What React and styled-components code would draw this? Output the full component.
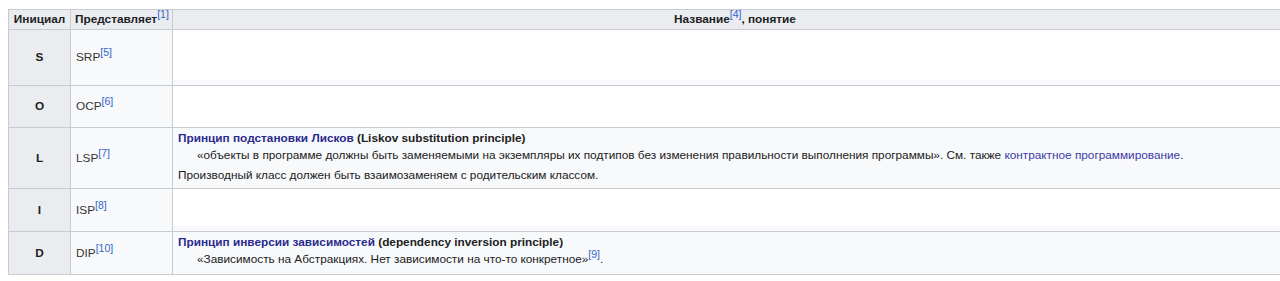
import React from "react";
import styled, { createGlobalStyle } from "styled-components";

const GlobalStyle = createGlobalStyle`
  body {
    margin: 9px 0 0 8px;
    background: #ffffff;
    font-family: "Liberation Sans", Arial, sans-serif;
    color: #202122;
    overflow: hidden;
  }
`;

const Table = styled.table`
  width: 1290px;
  border-collapse: collapse;
  background: #f8f9fa;
  font-size: 11.8px;
  line-height: 17px;
  table-layout: fixed;
`;

const HeadCell = styled.th`
  background: #eaecf0;
  border: 1px solid #c8ccd1;
  font-weight: bold;
  text-align: center;
  padding: 0 4px;
  height: 20px;
  white-space: nowrap;
  width: ${(p) => p.$w || "auto"};
  box-sizing: border-box;
`;

const Initial = styled.th`
  background: #eaecf0;
  border: 1px solid #c8ccd1;
  font-weight: bold;
  text-align: center;
  padding: 0 4px;
  height: ${(p) => p.$h}px;
  box-sizing: border-box;
`;

const Abbr = styled.td`
  border: 1px solid #c8ccd1;
  padding: 0 5px;
  color: #333;
  vertical-align: middle;
`;

const Body = styled.td`
  border: 1px solid #c8ccd1;
  padding: ${(p) => (p.$blank ? "0" : "2px 5px 4px")};
  background: ${(p) => (p.$white ? "#ffffff" : "#f8f9fa")};
  vertical-align: top;
`;

const Blank = styled.div`
  height: ${(p) => p.$h}px;
  background: #ffffff;
  margin-right: ${(p) => p.$r || 0}px;
`;

const Ref = styled.sup`
  font-size: 10.5px;
  line-height: 0;
  color: #3366cc;
  font-weight: normal;
  vertical-align: 5px;
`;

const Link = styled.a`
  color: ${(p) => (p.$visited ? "#2a2a8e" : "#3a3aa8")};
  text-decoration: none;
  font-weight: ${(p) => (p.$bold ? "bold" : "normal")};
`;

const Title = styled.div`
  font-weight: bold;
  color: #202122;
`;

const Quote = styled.div`
  padding-left: 19px;
`;

const Note = styled.p`
  margin: 3px 0 0;
`;

export default function App() {
  return (
    <>
      <GlobalStyle />
      <Table>
        <thead>
          <tr>
            <HeadCell $w="62px">Инициал</HeadCell>
            <HeadCell $w="102px">
              Представляет<Ref>[1]</Ref>
            </HeadCell>
            <HeadCell>
              Название<Ref>[4]</Ref>, понятие
            </HeadCell>
          </tr>
        </thead>
        <tbody>
          <tr>
            <Initial $h={56}>S</Initial>
            <Abbr>
              SRP<Ref>[5]</Ref>
            </Abbr>
            <Body $blank>
              <Blank $h={50} $r={13} />
            </Body>
          </tr>
          <tr>
            <Initial $h={42}>O</Initial>
            <Abbr>
              OCP<Ref>[6]</Ref>
            </Abbr>
            <Body $blank $white />
          </tr>
          <tr>
            <Initial $h={61}>L</Initial>
            <Abbr>
              LSP<Ref>[7]</Ref>
            </Abbr>
            <Body>
              <Title>
                <Link $bold $visited href="#">
                  Принцип подстановки Лисков
                </Link>{" "}
                (Liskov substitution principle)
              </Title>
              <Quote>
                «объекты в программе должны быть заменяемыми на экземпляры их
                подтипов без изменения правильности выполнения программы». См.
                также <Link href="#">контрактное программирование</Link>.
              </Quote>
              <Note>Производный класс должен быть взаимозаменяем с родительским классом.</Note>
            </Body>
          </tr>
          <tr>
            <Initial $h={43}>I</Initial>
            <Abbr>
              ISP<Ref>[8]</Ref>
            </Abbr>
            <Body $blank>
              <Blank $h={37} $r={10} />
            </Body>
          </tr>
          <tr>
            <Initial $h={43}>D</Initial>
            <Abbr>
              DIP<Ref>[10]</Ref>
            </Abbr>
            <Body>
              <Title>
                <Link $bold $visited href="#">
                  Принцип инверсии зависимостей
                </Link>{" "}
                (dependency inversion principle)
              </Title>
              <Quote>
                «Зависимость на Абстракциях. Нет зависимости на что-то
                конкретное»<Ref>[9]</Ref>.
              </Quote>
            </Body>
          </tr>
        </tbody>
      </Table>
    </>
  );
}
